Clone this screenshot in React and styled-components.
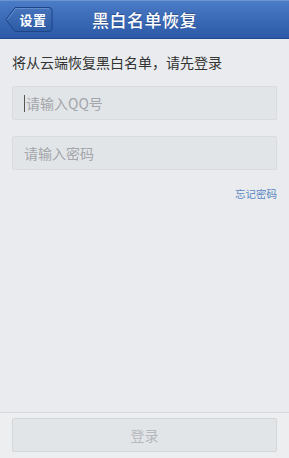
import React from "react";
import styled, { createGlobalStyle } from "styled-components";

const GlobalStyle = createGlobalStyle`
  html, body, #root {
    margin: 0;
    padding: 0;
    height: 100%;
  }
  body {
    font-family: "Noto Sans CJK SC", "Noto Sans", sans-serif;
    background: #e9ebee;
  }
  * { box-sizing: border-box; }
`;

const Page = styled.div`
  display: flex;
  flex-direction: column;
  height: 100vh;
  background: #e9ebee;
`;

const Header = styled.header`
  position: relative;
  height: 39px;
  flex-shrink: 0;
  display: flex;
  align-items: center;
  justify-content: center;
  background: linear-gradient(to bottom, #4b7cc6 0%, #3a69b6 50%, #2c5aa8 100%);
  border-top: 1px solid #6b95d2;
  border-bottom: 1px solid #1f4a92;
`;

const BackButton = styled.button`
  position: absolute;
  left: 5px;
  top: 5px;
  height: 27px;
  width: 48px;
  padding: 0 0 0 8px;
  border: none;
  background: none;
  color: #fff;
  font-family: inherit;
  font-size: 13px;
  font-weight: 700;
  display: flex;
  align-items: center;
  justify-content: center;

  svg {
    position: absolute;
    left: 0;
    top: 0;
  }
  span {
    position: relative;
    letter-spacing: 0.5px;
  }
`;

const Title = styled.h1`
  margin: 0;
  color: #fff;
  font-size: 17px;
  font-weight: 500;
  letter-spacing: 0.5px;
  text-shadow: 0 -1px 0 rgba(0, 0, 0, 0.25);
`;

const Main = styled.main`
  flex: 1;
  padding: 0 12px;
  display: flex;
  flex-direction: column;
`;

const Hint = styled.p`
  margin: 12px 0 0;
  font-size: 14px;
  line-height: 22px;
  color: #333;
`;

const Field = styled.div`
  margin-top: ${(p) => p.$gap}px;
  height: 34px;
  border: 1px solid #d9dbde;
  border-radius: 2px;
  background: #e2e5e8;
  display: flex;
  align-items: center;
  padding-left: 11px;
  font-size: 14px;
  color: #a3a6aa;
`;

const Caret = styled.i`
  width: 1px;
  height: 17px;
  background: #555;
  margin-right: 1px;
`;

const Forgot = styled.a`
  align-self: flex-end;
  margin-top: 16px;
  font-size: 10.5px;
  color: #5a87c2;
  text-decoration: none;
`;

const Footer = styled.footer`
  flex-shrink: 0;
  border-top: 1px solid #d6d8db;
  background: #eceef0;
  padding: 5px 12px 6px;
`;

const LoginButton = styled.button`
  width: 100%;
  height: 34px;
  border: 1px solid #d4d7da;
  border-radius: 2px;
  background: #e2e5e8;
  color: #b5b8bc;
  font-family: inherit;
  font-size: 14px;
`;

export default function App() {
  return (
    <>
      <GlobalStyle />
      <Page>
        <Header>
          <BackButton>
            <svg width="48" height="27" viewBox="0 0 48 27">
              <defs>
                <linearGradient id="bb" x1="0" y1="0" x2="0" y2="1">
                  <stop offset="0" stopColor="#4675bd" />
                  <stop offset="1" stopColor="#2c5aa4" />
                </linearGradient>
              </defs>
              <path
                d="M1 13.5 L10 1.5 H44 Q47 1.5 47 4.5 V22.5 Q47 25.5 44 25.5 H10 Z"
                fill="url(#bb)"
                stroke="#1d4588"
                strokeWidth="1"
              />
              <path
                d="M2.5 13.5 L10.6 2.6 H44"
                fill="none"
                stroke="#6d95d0"
                strokeWidth="0.8"
              />
            </svg>
            <span>设置</span>
          </BackButton>
          <Title>黑白名单恢复</Title>
        </Header>
        <Main>
          <Hint>将从云端恢复黑白名单，请先登录</Hint>
          <Field $gap={13}>
            <Caret />
            请输入QQ号
          </Field>
          <Field $gap={16}>请输入密码</Field>
          <Forgot href="#">忘记密码</Forgot>
        </Main>
        <Footer>
          <LoginButton>登录</LoginButton>
        </Footer>
      </Page>
    </>
  );
}
